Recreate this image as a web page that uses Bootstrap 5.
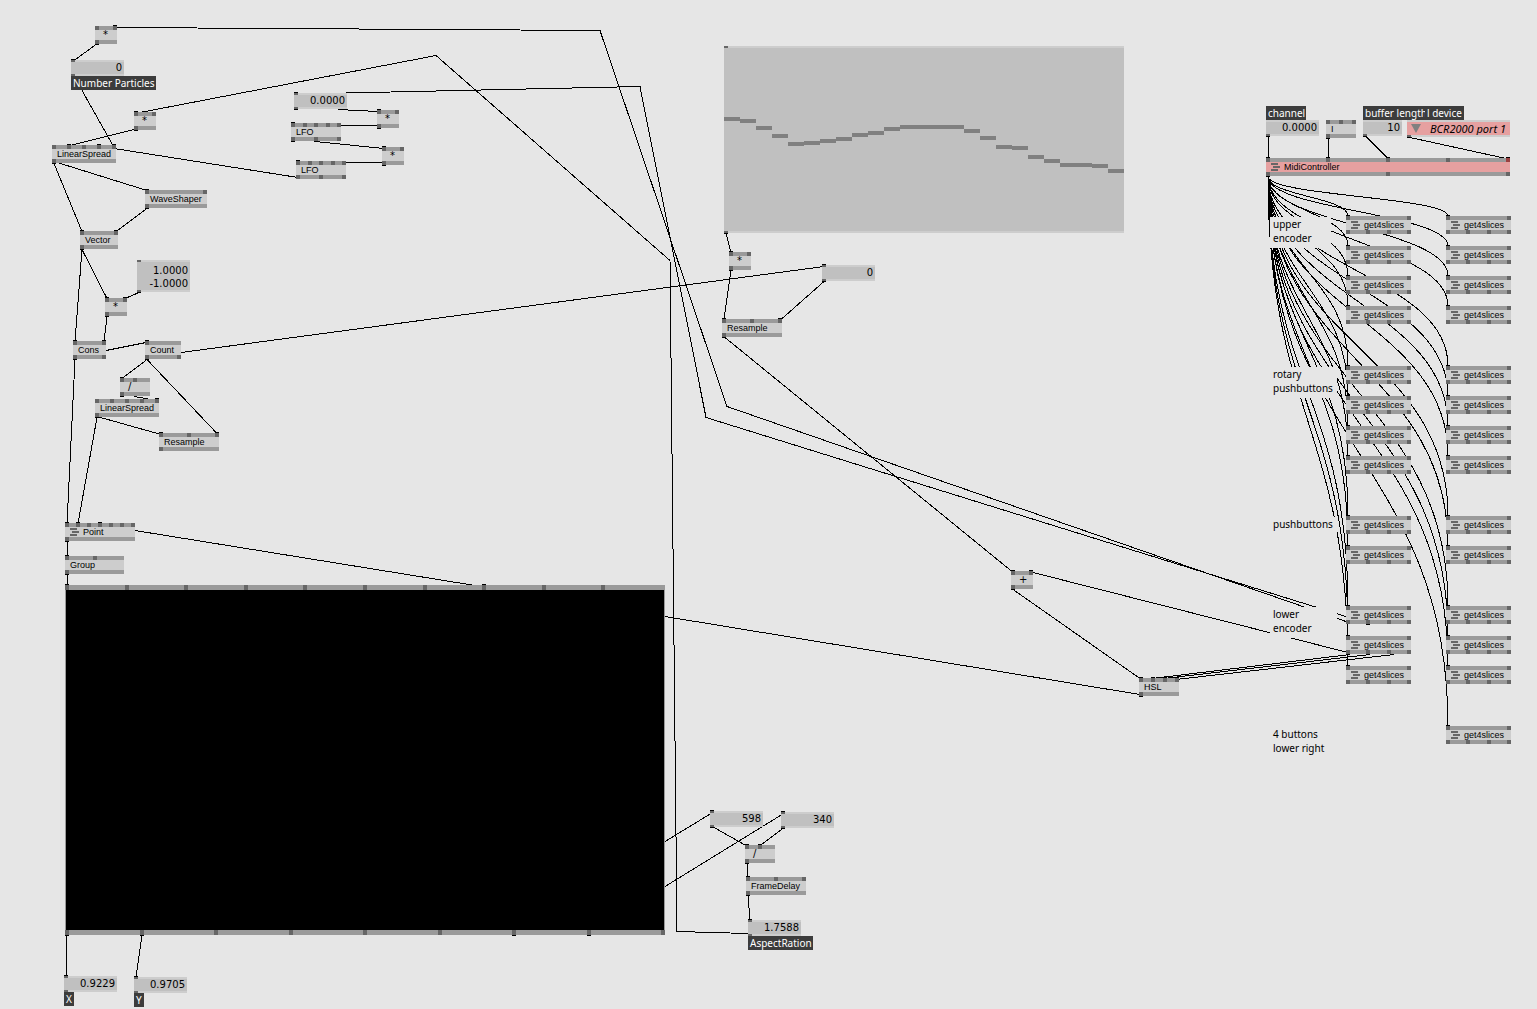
<!DOCTYPE html>
<html lang="en">
<head>
<meta charset="utf-8">
<meta name="viewport" content="width=device-width, initial-scale=1">
<title>Particles patch</title>
<link rel="stylesheet" href="https://cdn.jsdelivr.net/npm/bootstrap@5.3.0/dist/css/bootstrap.min.css">
<style>
  :root { --patch: #e6e6e6; --face: #cdcdcd; --bar: #9a9a9a; --pin: #666; --field: #c0c0c0; --alert: #e6a0a0; }
  body { background: var(--patch); color: #000; font-family: "Liberation Sans", sans-serif; font-size: 9px; line-height: 10px; }
  .patch { min-height: 100vh; min-width: 1520px; }
  .links { z-index: 0; overflow: visible; pointer-events: none; }
  .links path { fill: none; stroke: #000; stroke-width: 1; shape-rendering: crispEdges; }
  .item { z-index: 1; white-space: nowrap; }
  .pins { background: var(--bar); height: 4px; }
  .pin { width: 4px; height: 100%; background: var(--pin); }
  .pins-in .on { box-shadow: 0 -1px 0 #000; }
  .pins-out .on { box-shadow: 0 1px 0 #000; }
  .pin.fault { background: #9a4040; }
  .face { background: var(--face); height: 10px; padding-left: 5px; gap: 4px; }
  .face.sign { padding-left: 8px; font-family: "DejaVu Sans", sans-serif; font-size: 10px; }
  .face.fault, .pick .field, .pick .pins { background: var(--alert); }
  .io .pins { height: 2px; background: var(--face); }
  .field { display: block; width: 100%; height: 12px; border: 0; border-radius: 0; padding: 0 2px; background: var(--field); color: #000;
    font-family: "DejaVu Sans", sans-serif; font-size: 10px; line-height: 12px; text-align: right; resize: none; overflow: hidden; outline-offset: 1px; }
  textarea.field { height: 28px; padding-top: 2px; line-height: 13px; }
  .pick .field { appearance: none; height: 13px; padding: 0 4px 0 20px; font-family: "Noto Sans", sans-serif; font-style: italic; font-size: 11px; line-height: 13px; }
  .pick svg { left: 4px; top: 4px; }
  .tag { background: #3c3c3c; color: #fff; padding: 0 2px; font-family: "Noto Sans", sans-serif; font-size: 10px; line-height: 14px; }
  .note { background: var(--patch); padding: 0 3px 3px; font-family: "Noto Sans", sans-serif; font-size: 10px; line-height: 14px; white-space: pre-line; }
  .render .pins { height: 5px; }
  .screen { background: #000; height: 340px; margin: 0 1px; }
  .render { background: var(--bar); }
  .plot { height: 183px; background: var(--field); }
  .plot rect { fill: #808080; }
</style>
</head>
<body>
<main class="patch position-relative" id="patch">
  <svg class="links position-absolute top-0 start-0 w-100 h-100" id="links" aria-hidden="true"></svg>
</main>

<script src="https://cdn.jsdelivr.net/npm/bootstrap@5.3.0/dist/js/bootstrap.bundle.min.js"></script>
<script>
const patch = document.getElementById('patch');
const icon = '<svg width="9" height="10" fill="#666" shape-rendering="crispEdges" aria-hidden="true"><path d="M0 1h7v2H0zM2 4h7v2H2zM0 7h7v2H0z"/></svg>';

// Pin codes: x connected, o free, r faulty, - empty slot
const pins = (codes, side) => `<div class="pins pins-${side} d-flex justify-content-between">` +
  [...codes].map(c => `<i class="pin${c === 'x' || c === 'r' ? ' on' : ''}${c === 'r' ? ' fault' : ''}${c === '-' ? ' invisible' : ''}"></i>`).join('') + '</div>';

function place(x, y, w, cls, html) {
  const el = document.createElement('div');
  el.className = 'item position-absolute ' + cls;
  el.style.left = x + 'px';
  el.style.top = y + 'px';
  if (w) el.style.width = w + 'px';
  el.innerHTML = html;
  patch.append(el);
}

// x, y, width, caption, inputs, outputs, kind
const nodes = [
  [95, 26, 22, '*', 'ox', 'x', 'sign'], [134, 112, 22, '*', 'xo', 'x', 'sign'],
  [52, 145, 64, 'LinearSpread', 'oxoxx', 'x'], [145, 190, 62, 'WaveShaper', 'xo', 'x'],
  [80, 231, 38, 'Vector', 'xx', 'x'], [377, 110, 22, '*', 'xo', 'x', 'sign'],
  [291, 123, 50, 'LFO', 'xoooo', 'xxo'], [382, 147, 22, '*', 'xo', 'x', 'sign'],
  [296, 161, 50, 'LFO', 'xoooo', 'ooo'], [105, 298, 22, '*', 'xx', 'x', 'sign'],
  [73, 341, 33, 'Cons', 'xx', 'xo'], [145, 341, 36, 'Count', 'x', 'xo'],
  [120, 378, 30, '/', 'xo-', 'x', 'sign'], [95, 399, 64, 'LinearSpread', 'oooox', 'x'],
  [159, 433, 60, 'Resample', 'xox', 'o'], [65, 523, 70, 'Point', 'xxoxooo', 'x', 'module'],
  [65, 556, 59, 'Group', 'xo-', 'x'], [729, 252, 22, '*', 'xo', 'x', 'sign'],
  [722, 319, 60, 'Resample', 'xox', 'x'], [745, 845, 30, '/', 'xx-', 'x', 'sign'],
  [746, 877, 60, 'FrameDelay', 'xoo', 'x'], [1011, 571, 22, '+', 'xx', 'x', 'sign'],
  [1139, 678, 40, 'HSL', 'xxxx', 'x'], [1326, 120, 30, 'I', 'ooo', 'x'],
  [1266, 158, 244, 'MidiController', 'xxxor', 'xoo', 'module fault']
];
const rows = [216, 246, 276, 306, 366, 396, 426, 456, 516, 546, 606, 636, 666];
const slices = [...rows.map(y => [1346, y]), ...[...rows, 726].map(y => [1446, y])];
slices.forEach(([x, y]) => nodes.push([x, y, 65, 'get4slices', 'xo', x === 1346 && y === 606 ? 'oxoo' : 'oooo', 'module']));

// start, bends and end of each straight link
const lines = [
  '116,27 600,30 727,406 1346,621', '323,93 640,86 706,417 1346,616', '140,112 436,55 670,260 677,931 748,933',
  '96,44 74,60', '82,90 113,145', '134,129 70,145', '114,148 298,177', '54,163 82,231', '54,161 147,190', '147,208 116,231',
  '338,109 378,111', '341,125 379,125', '315,141 384,148', '346,162 384,162', '82,249 75,341', '82,249 107,298',
  '139,292 125,298', '107,316 104,341', '106,350 146,342', '181,352 824,266', '147,359 122,378', '147,359 217,433',
  '134,396 157,400', '97,416 161,434', '97,417 78,523', '75,359 67,523', '135,530 475,585', '67,541 67,556', '67,574 67,585',
  '66,935 66,976', '142,935 136,977', '665,841 711,813', '665,886 782,814', '714,827 746,845', '783,828 760,845',
  '747,863 748,877', '748,895 750,920', '665,616 1140,694', '1152,678 1350,654', '1164,678 1370,654', '1176,679 1394,654',
  '1013,589 1140,678', '725,337 1012,571', '1033,572 1348,652', '726,233 731,252', '731,270 724,319', '824,281 781,319',
  '1268,136 1268,158', '1328,138 1328,158', '1366,136 1388,158', '1410,137 1506,158'
];
const curves = slices.map(([x, y]) => {
  const k = (y - 177) * 0.48;
  return `M1268 176.5C1268 ${177 + k} ${x + 2} ${y - k} ${x + 2} ${y}`;
});
const straight = lines.map(l => 'M' + l.split(' ').map(p => {
  const [x, y] = p.split(',').map(Number);
  return `${x} ${y + 0.5}`;
}).join('L'));
document.getElementById('links').innerHTML = [...straight, ...curves].map(d => `<path d="${d}"/>`).join('');

// Comments lie over the links
[[1270, 217, 61, 'upper\nencoder'], [1270, 367, 67, 'rotary\npushbuttons'], [1270, 517, 67, 'pushbuttons'],
 [1270, 607, 67, 'lower\nencoder'], [1270, 727, 67, '4 buttons\nlower right']
].forEach(([x, y, w, text]) => place(x, y, w, 'note', text));

nodes.forEach(([x, y, w, caption, ins, outs, kind = '']) => place(x, y, w, 'node',
  pins(ins, 'in') + `<div class="face ${kind} d-flex align-items-center">${kind.includes('module') ? icon : ''}<span>${caption}</span></div>` + pins(outs, 'out')));

// x, y, width, value, id, name, inputs, outputs
[[71, 60, 53, '0', 'particles', '', 'x', 'o'], [294, 93, 53, '0.0000', 'lfo', 'LFO period', 'x', 'x'],
 [822, 265, 53, '0', 'count', 'Resample count', 'x', 'x'], [64, 976, 53, '0.9229', 'mx', '', 'x', 'o'],
 [134, 977, 53, '0.9705', 'my', '', 'x', 'o'], [710, 811, 53, '598', 'bw', 'Width', 'x', 'x'],
 [781, 812, 53, '340', 'bh', 'Height', 'x', 'x'], [748, 920, 53, '1.7588', 'aspect', '', 'x', 'o'],
 [1266, 120, 53, '0.0000', 'channel', '', '-', 'x'], [1363, 120, 39, '10', 'buffer', '', '-', 'x']
].forEach(([x, y, w, value, id, name, ins, outs]) => place(x, y, w, 'io',
  pins(ins, 'in') + `<input class="field" type="text" id="${id}" value="${value}"${name ? ` aria-label="${name}"` : ''}>` + pins(outs, 'out')));
place(137, 260, 53, 'io', pins('o', 'in') + '<textarea class="field" aria-label="Factors" rows="2">1.0000\n-1.0000</textarea>' + pins('x', 'out'));
place(1407, 120, 103, 'io pick', pins('-', 'in') +
  '<select class="field" id="device"><option>BCR2000 port 1</option></select>' +
  '<svg class="position-absolute" width="10" height="9" aria-hidden="true"><path d="M0 0h10L5 9z" fill="#808080"/></svg>' + pins('x', 'out'));

[[71, 76, 85, 'Number Particles', 'particles'], [64, 992, 10, 'X', 'mx'], [134, 993, 10, 'Y', 'my'],
 [748, 936, 65, 'AspectRation', 'aspect'], [1266, 106, 40, 'channel', 'channel'],
 [1363, 106, 62, 'buffer length', 'buffer'], [1425, 106, 39, 'l device', 'device']
].forEach(([x, y, w, text, id]) => place(x, y, w, 'tag', `<label class="d-block" for="${id}">${text}</label>`));

// Step plot, one 16 px slice per value
const levels = [69, 71, 78, 86, 94, 93, 91, 89, 85, 83, 79, 77, 77, 77, 77, 81, 88, 97, 98, 107, 111, 115, 115, 116, 121];
place(724, 46, 400, 'io', pins('o', 'in') + `<svg class="plot d-block w-100" role="img" aria-label="Spread values">${levels.map((v, i) => `<rect x="${i * 16}" y="${v}" width="16" height="4"/>`).join('')}</svg>` + pins('x', 'out'));

// Renderer
place(65, 585, 600, 'render', pins('xooooooxoo-', 'in') + '<div class="screen"></div>' + pins('xxooooxxo', 'out'));
</script>
</body>
</html>
